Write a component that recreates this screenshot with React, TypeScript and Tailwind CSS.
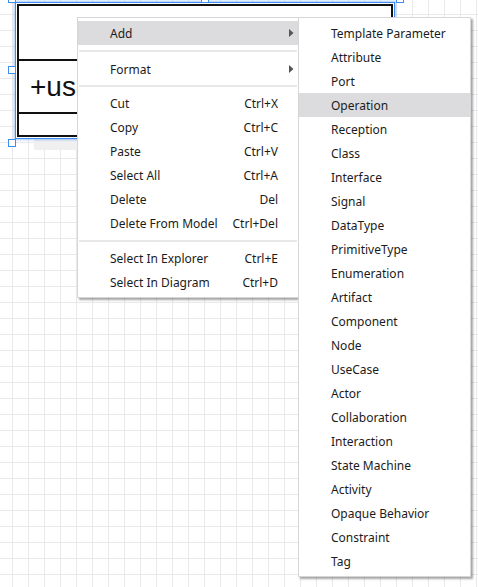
import React from "react";

type Item = { label: string; shortcut?: string; arrow?: boolean; active?: boolean } | { sep: number; line: number };

const mainItems: Item[] = [
  { label: "Add", arrow: true, active: true },
  { sep: 12, line: 5 },
  { label: "Format", arrow: true },
  { sep: 10, line: 4 },
  { label: "Cut", shortcut: "Ctrl+X" },
  { label: "Copy", shortcut: "Ctrl+C" },
  { label: "Paste", shortcut: "Ctrl+V" },
  { label: "Select All", shortcut: "Ctrl+A" },
  { label: "Delete", shortcut: "Del" },
  { label: "Delete From Model", shortcut: "Ctrl+Del" },
  { sep: 11, line: 5 },
  { label: "Select In Explorer", shortcut: "Ctrl+E" },
  { label: "Select In Diagram", shortcut: "Ctrl+D" },
];

const subItems = [
  "Template Parameter",
  "Attribute",
  "Port",
  "Operation",
  "Reception",
  "Class",
  "Interface",
  "Signal",
  "DataType",
  "PrimitiveType",
  "Enumeration",
  "Artifact",
  "Component",
  "Node",
  "UseCase",
  "Actor",
  "Collaboration",
  "Interaction",
  "State Machine",
  "Activity",
  "Opaque Behavior",
  "Constraint",
  "Tag",
];

function Handle({ cls }: { cls: string }) {
  return <div className={`absolute w-[8px] h-[8px] bg-white border border-[#3d8ef0] ${cls}`} />;
}

export default function App() {
  return (
    <div
      className="relative w-[478px] h-[587px] overflow-hidden bg-white bg-[linear-gradient(to_right,#e9e9e9_1px,transparent_1px),linear-gradient(to_bottom,#e9e9e9_1px,transparent_1px)] bg-[size:16px_16px] bg-[position:12px_14px]"
      style={{ fontFamily: '"Noto Sans", "Segoe UI", sans-serif' }}
    >
      {/* class box shadow */}
      <div className="absolute left-[34px] top-[138px] w-[360px] h-[12px] bg-[#f0f0f0]" />
      {/* class box */}
      <div className="absolute left-[15px] top-[2px] w-[380px] h-[137px] border border-[#3d8ef0] shadow-[0_0_2px_1px_rgba(61,142,240,0.45)] bg-white">
        <div className="ml-[1px] mt-[1px] w-[376px] h-[133px] border-2 border-[#111] flex flex-col">
          <div className="h-[55px] border-b-2 border-[#111]" />
          <div
            className="h-[53px] border-b-2 border-[#111] flex items-center pl-[11px] text-[28px] text-[#111] leading-none whitespace-nowrap overflow-hidden"
            style={{ fontFamily: '"Liberation Sans", Arial, sans-serif' }}
          >
            +user
          </div>
          <div className="flex-1" />
        </div>
      </div>
      <Handle cls="left-[8px] top-[-5px]" />
      <Handle cls="left-[8px] top-[66px]" />
      <Handle cls="left-[8px] top-[139px]" />
      <Handle cls="left-[201px] top-[-5px]" />
      <Handle cls="left-[396px] top-[-5px]" />

      {/* main context menu */}
      <div className="absolute left-[77px] top-[17px] w-[222px] bg-white border border-[#d6d6d6] shadow-[2px_2px_2px_rgba(0,0,0,0.35)] py-[3px] text-[12px] text-[#1b1b1b]">
        {mainItems.map((it, i) =>
          "sep" in it ? (
            <div key={i} className="flex flex-col" style={{ height: it.sep }}>
              <div style={{ height: it.line }} />
              <div className="h-[2px] bg-[#e8e8e8] mx-[1px]" />
            </div>
          ) : (
            <div
              key={i}
              className={`relative h-[24px] flex items-center pt-[2px] pl-[32px] pr-[20px] ${it.active ? "bg-[#dcdcdf]" : ""}`}
            >
              <span className="flex-1 whitespace-nowrap">{it.label}</span>
              {it.shortcut && <span className="whitespace-nowrap">{it.shortcut}</span>}
              {it.arrow && (
                <svg className="absolute left-[211px] top-[8px]" width="5" height="8" viewBox="0 0 5 8">
                  <path d="M0 0 L4.5 4 L0 8 Z" fill="#555" />
                </svg>
              )}
            </div>
          )
        )}
      </div>

      {/* submenu */}
      <div className="absolute left-[298px] top-[17px] w-[173px] bg-white border border-[#d6d6d6] shadow-[2px_2px_2px_rgba(0,0,0,0.35)] py-[3px] text-[12px] text-[#1b1b1b]">
        {subItems.map((s) => (
          <div
            key={s}
            className={`h-[24px] flex items-center pt-[2px] pl-[32px] whitespace-nowrap ${s === "Operation" ? "bg-[#dcdcdf]" : ""}`}
          >
            {s}
          </div>
        ))}
      </div>
    </div>
  );
}
